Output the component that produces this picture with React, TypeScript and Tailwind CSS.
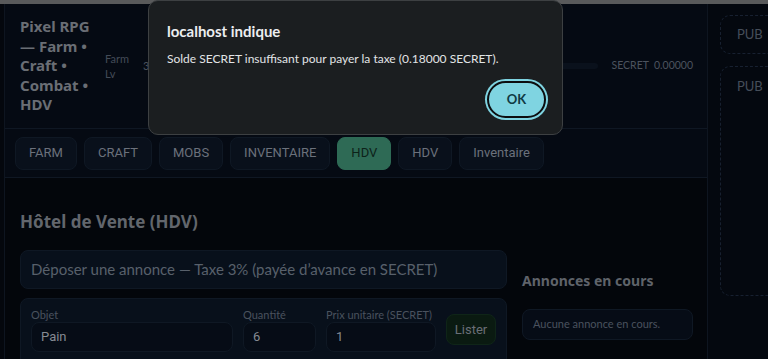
import React from "react";

const ui = { fontFamily: 'Lato, "Noto Sans", sans-serif' };
const head = { fontFamily: '"Noto Sans", "Open Sans", sans-serif' };
const arial = { fontFamily: 'Roboto, "Liberation Sans", Arial, sans-serif' };

const tabs = ["FARM", "CRAFT", "MOBS", "INVENTAIRE", "HDV", "HDV", "Inventaire"];

export default function App() {
  return (
    <div className="relative w-[768px] h-[359px] overflow-hidden bg-[#04070d]" style={ui}>
      <div className="h-[4px] bg-[#595a5b]" />
      <div className="flex h-[355px]">
        {/* main */}
        <div className="ml-[4px] w-[704px] shrink-0 border-l border-r border-[#0e1520] flex flex-col">
          {/* header */}
          <div className="h-[125px] shrink-0 bg-[#050a13] border-b border-[#0f1723] flex items-center pl-[15px] pr-[14px]">
            <div className="w-[74px] text-[15px] leading-[19.5px] font-bold text-[#6a6e75]" style={head}>
              Pixel RPG — Farm • Craft • Combat • HDV
            </div>
            <div className="ml-[11px] flex items-center">
              <div className="text-[11px] leading-[15px] text-[#434b57]">
                Farm
                <br />
                Lv
              </div>
              <div className="ml-[14px] text-[11px] text-[#4c535e]">3</div>
            </div>
            <div className="ml-auto flex items-center">
              <div className="w-[440px] h-[6px] rounded-full bg-[#0a111c]" />
              <div className="ml-[13px] text-[10.5px] text-[#4c535e] whitespace-nowrap">SECRET&nbsp; 0.00000</div>
            </div>
          </div>
          {/* tabs */}
          <div className="h-[49px] shrink-0 bg-[#050a13] border-b border-[#0f1723] flex items-center gap-[7px] pl-[10px]">
            {tabs.map((t, i) => (
              <button
                key={i}
                className={
                  "h-[33px] px-[13px] rounded-[8px] border text-[13px] " +
                  (i === 4
                    ? "bg-[#2e6a55] border-[#2e6a55] text-[#0d2219]"
                    : "bg-[#09101b] border-[#0f1824] text-[#6b717b]")
                }
                style={arial}
              >
                {t}
              </button>
            ))}
          </div>
          {/* content */}
          <div className="flex-1 bg-[#03060b] px-[15px] pt-[33px]">
            <h2 className="text-[17px] leading-[22px] font-bold text-[#62666d]" style={head}>Hôtel de Vente (HDV)</h2>
            <div className="mt-[17px] flex gap-[15px]">
              <div className="w-[487px] shrink-0 flex flex-col gap-[9px]">
                <div className="h-[39px] rounded-[8px] bg-[#08101b] border border-[#0f1824] flex items-center px-[10px] text-[15px] text-[#58606b]">
                  Déposer une annonce — Taxe 3% (payée d’avance en SECRET)
                </div>
                <div className="h-[70px] rounded-[8px] bg-[#08101b] border border-[#0f1824] px-[10px] pt-[9px] flex items-start gap-[10px]">
                  <div className="flex flex-col">
                    <span className="text-[11px] leading-[14px] text-[#4a525e] whitespace-nowrap">Objet</span>
                    <div className="w-[202px] h-[30px] rounded-[8px] bg-[#060c16] border border-[#0f1824] flex items-center px-[9px] text-[13px] text-[#858a92]" style={arial}>Pain</div>
                  </div>
                  <div className="flex flex-col">
                    <span className="text-[11px] leading-[14px] text-[#4a525e] whitespace-nowrap">Quantité</span>
                    <div className="w-[73px] h-[30px] rounded-[8px] bg-[#060c16] border border-[#0f1824] flex items-center px-[9px] text-[13px] text-[#858a92]" style={arial}>6</div>
                  </div>
                  <div className="flex flex-col">
                    <span className="text-[11px] leading-[14px] text-[#4a525e] whitespace-nowrap">Prix unitaire (SECRET)</span>
                    <div className="w-[110px] h-[30px] rounded-[8px] bg-[#060c16] border border-[#0f1824] flex items-center px-[9px] text-[13px] text-[#858a92]" style={arial}>1</div>
                  </div>
                  <button className="mt-[6px] w-[51px] h-[31px] rounded-[8px] bg-[#0a1a11] border border-[#0f2518] text-[13px] text-[#6a6f77]" style={arial}>Lister</button>
                </div>
              </div>
              <div className="w-[171px] shrink-0 pt-[21px]">
                <div className="text-[14px] leading-[20px] font-bold text-[#5f636a]" style={head}>Annonces en cours</div>
                <div className="mt-[18px] h-[31px] rounded-[8px] bg-[#060c16] border border-[#0f1824] flex items-center px-[10px] text-[11px] text-[#4a525e]">
                  Aucune annonce en cours.
                </div>
              </div>
            </div>
          </div>
        </div>
        {/* sidebar */}
        <div className="w-[160px] shrink-0 bg-[#04080f] pl-[12px] pt-[11px] flex flex-col gap-[12px]">
          <div className="h-[39px] rounded-[10px] border border-dashed border-[#172030] px-[16px] flex items-center text-[13px] text-[#464e5a]">PUB</div>
          <div className="h-[230px] rounded-[10px] border border-dashed border-[#172030] px-[16px] pt-[10px] text-[13px] text-[#464e5a]">PUB</div>
        </div>
      </div>

      {/* alert dialog */}
      <div className="absolute left-[148px] top-0 w-[415px] h-[135px] rounded-[10px] bg-[#1b1e20] border border-[#3d4042] pl-[18px] pr-[16px] pt-[20px]" style={ui}>
        <div className="text-[15px] leading-[20px] font-bold text-[#eceef0]">localhost indique</div>
        <div className="mt-[9px] text-[12px] leading-[17px] text-[#e2e4e6]">
          Solde SECRET insuffisant pour payer la taxe (0.18000 SECRET).
        </div>
        <div className="mt-[14px] flex justify-end">
          <button className="w-[59px] h-[37px] rounded-full bg-[#7fd4e1] border-2 border-[#0c0e10] shadow-[0_0_0_2px_#7fd4e1] text-[13px] font-bold text-[#0f3a43]">
            OK
          </button>
        </div>
      </div>
    </div>
  );
}
